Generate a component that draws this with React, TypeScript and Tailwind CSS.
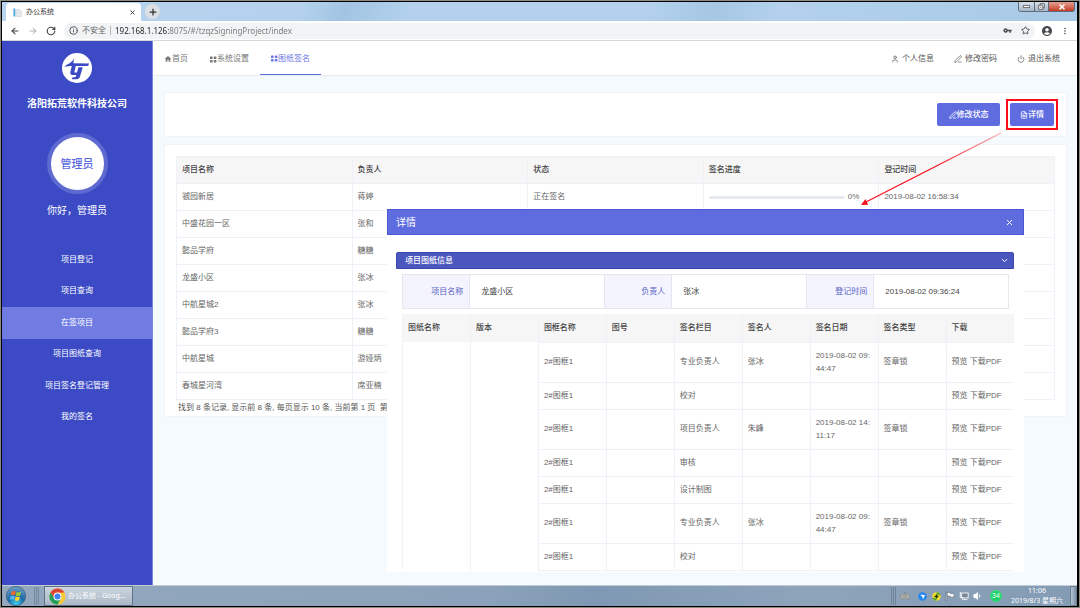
import type { ReactNode } from 'react';
import { ArrowLeft, ArrowRight, RotateCw, Info, Star, Plus, X, ChevronDown, User, PenLine, Power, FileText, Volume1 } from 'lucide-react';
import { MdAccountCircle, MdMoreVert, MdVpnKey, MdHome } from 'react-icons/md';

const projects = [
  ['虢园新居', '蒋婷'],
  ['中盛花园一区', '张和'],
  ['懿品学府', '糖糖'],
  ['龙盛小区', '张冰'],
  ['中航星城2', '张冰'],
  ['懿品学府3', '糖糖'],
  ['中航星城', '游娅炳'],
  ['春城星河湾', '席亚楠'],
];

const signatures = [
  { item: '专业负责人', who: '张冰', date: '2019-08-02 09:44:47', kind: '签章锁' },
  { item: '校对' },
  { item: '项目负责人', who: '朱峰', date: '2019-08-02 14:11:17', kind: '签章锁' },
  { item: '审核' },
  { item: '设计制图' },
  { item: '专业负责人', who: '张冰', date: '2019-08-02 09:44:47', kind: '签章锁' },
  { item: '校对' },
];

const menu = ['项目登记', '项目查询', '在签项目', '项目图纸查询', '项目签名登记管理', '我的签名'];

function GridIcon() {
  return (
    <svg viewBox="0 0 7 7" className="size-[7px]" fill="currentColor" aria-hidden="true">
      <rect x="0" y="0.4" width="2.6" height="2.6" rx="0.5" />
      <rect x="3.8" y="0.4" width="2.6" height="2.6" rx="0.5" />
      <rect x="0" y="4" width="2.6" height="2.6" rx="0.5" />
      <rect x="3.8" y="4" width="2.6" height="2.6" rx="0.5" />
    </svg>
  );
}

function CompanyLogo() {
  return (
    <svg viewBox="0 0 30 30" className="size-[30px]" aria-hidden="true">
      <circle cx="15" cy="15" r="15" fill="#fff" />
      <path fill="#3c4bc5" d="M2.2 13.8 Q4.5 11.4 7.6 10.2 Q10.4 8.8 12 5.4 L11.4 10.3 L27.2 10.5 L26 13.1 L8 13.1 Z" />
      <path fill="#3c4bc5" d="M9.8 12.8 H13.8 L12.3 19.4 H15 L16.4 14.2 H20.8 L18 23.5 Q17.3 26.3 14.5 26.3 H9.8 L10.5 24.2 H13 Q14 24 14.4 22 H10.6 Q7.8 21.8 8.4 19 Z" />
    </svg>
  );
}

function ChromeIcon() {
  return (
    <svg viewBox="0 0 18 18" className="size-[17px]" aria-hidden="true">
      <circle cx="9" cy="9" r="8.5" fill="#f8c93a" />
      <path d="M1.64 4.75 A8.5 8.5 0 0 1 16.36 4.75 L9 4.9 L5.4 11 Z" fill="#dc4437" />
      <path d="M1.64 4.75 A8.5 8.5 0 0 0 9 17.5 L12.7 11.1 L5.4 11.2 Z" fill="#1e9e58" />
      <circle cx="9" cy="9" r="4.2" fill="#fff" />
      <circle cx="9" cy="9" r="3.2" fill="#3f83f1" />
    </svg>
  );
}

function StartIcon() {
  return (
    <svg viewBox="0 0 20 20" className="size-5" aria-hidden="true">
      <defs>
        <radialGradient id="orb" cx="50%" cy="90%" r="85%">
          <stop offset="0" stopColor="#3fd0f2" />
          <stop offset="0.5" stopColor="#1a6aa8" />
          <stop offset="1" stopColor="#6f9cc0" />
        </radialGradient>
      </defs>
      <circle cx="10" cy="10" r="9.6" fill="url(#orb)" stroke="#2c5477" strokeWidth="0.7" />
      <path d="M5.6 5.6 Q7.8 4.4 9.8 5.6 L9 9.3 Q7 8.4 4.8 9.3 Z" fill="#f0682f" />
      <path d="M10.6 6 Q12.6 7 15.2 5.8 L14.2 9.6 Q12 10.6 9.8 9.7 Z" fill="#9ccc3b" />
      <path d="M4.6 10.1 Q6.8 9.2 8.8 10.1 L8 13.8 Q6 12.8 3.8 13.8 Z" fill="#55b7ee" />
      <path d="M9.6 10.5 Q11.8 11.4 14 10.4 L13.1 14.2 Q11 15.2 8.8 14.2 Z" fill="#fdd22f" />
    </svg>
  );
}

function Grip() {
  return (
    <svg viewBox="0 0 5 18" className="h-[18px] w-[5px]" aria-hidden="true">
      <path d="M0.5 0.5V18M2.5 0.5V18M4.5 0.5V18" stroke="#56687a" strokeWidth="1" strokeDasharray="1 1" />
    </svg>
  );
}

function BrowserChrome() {
  return (
    <header>
      <div className="flex h-[19px] items-end bg-[linear-gradient(115deg,#b8d4ee_0%,#b3d1ed_28%,#a2c4e2_32%,#b3d1ed_38%,#b3d1ed_60%,#a6c6e4_66%,#b3d1ed_72%,#a9c9e6_100%)]">
        <div className="ml-1 flex h-[18px] w-[135px] items-center rounded-t-[4px] bg-white pr-[5px] pl-[7px] text-[7px] text-[#333]">
          <svg viewBox="0 0 9 9" className="mr-1 size-[9px]" aria-hidden="true">
            <rect x="0.4" y="0.5" width="2" height="8" fill="#5aa7d8" />
            <path d="M3.6 1.5h3l1.8 1.8v5.2H3.6z" fill="#e3e8ec" stroke="#c1cad2" strokeWidth="0.5" />
          </svg>
          <span className="grow">办公系统</span>
          <button aria-label="关闭标签页"><X className="size-[7px]" strokeWidth={3} /></button>
        </div>
        <button aria-label="新标签页" className="mb-[2px] ml-1 flex size-[15px] items-center justify-center rounded-full bg-[#dcdfe3] text-[#333]">
          <Plus className="size-[10px]" strokeWidth={3} />
        </button>
        <div className="mr-[2px] ml-auto flex h-[10px] self-start overflow-hidden rounded-b-[3px] border border-t-0 border-[#5d6b7a]">
          <button aria-label="最小化" className="flex w-[15px] items-center justify-center bg-linear-to-b from-[#d5dfe9] to-[#a5b6c9]"><span className="h-[3px] w-[7px] border border-[#777] bg-white" /></button>
          <button aria-label="还原" className="flex w-[14px] items-center justify-center border-l border-[#5d6b7a] bg-linear-to-b from-[#d5dfe9] to-[#a5b6c9] text-[#555]">
            <svg viewBox="0 0 8 8" className="size-[7px]" aria-hidden="true"><path d="M2.5 0.8h4.7v4.7H2.5z" fill="#fff" stroke="currentColor" /><path d="M0.8 2.5h4.7v4.7H0.8z" fill="#fff" stroke="currentColor" /><path d="M2.6 4.2h1.2v1.2H2.6z" fill="currentColor" /></svg>
          </button>
          <button aria-label="关闭窗口" className="flex w-[26px] items-center justify-center border-l border-[#5d6b7a] bg-linear-to-b from-[#e2a194] to-[#c4351c] text-white"><X className="size-[8px]" strokeWidth={5} /></button>
        </div>
      </div>
      <div className="flex h-5 items-center border-b border-[#d5d7da] bg-white pr-[7px] pl-2 text-[#45484c]">
        <button aria-label="后退"><ArrowLeft className="size-[10px]" strokeWidth={2.6} /></button>
        <button aria-label="前进" className="ml-2 text-[#aaadb1]"><ArrowRight className="size-[10px]" strokeWidth={2.4} /></button>
        <button aria-label="刷新" className="ml-2"><RotateCw className="size-[10px]" strokeWidth={2.8} /></button>
        <div className="ml-2 flex h-4 grow items-center rounded-full bg-[#f1f3f4] px-[5px]">
          <Info className="size-[9px]" strokeWidth={2.4} />
          <span className="ml-1 text-[8px] text-[#666]">不安全</span>
          <span className="mx-1 h-[9px] w-px bg-[#b5b8bb]" />
          <input
            aria-label="地址"
            defaultValue="192.168.1.126:8075/#/tzqzSigningProject/index"
            className="h-3 min-w-0 grow bg-[linear-gradient(90deg,#222_54px,#777_54px)] bg-clip-text font-['Noto_Sans'] text-[8px] text-transparent outline-none"
          />
          <MdVpnKey className="size-[9px]" />
          <Star className="ml-[9px] size-[9px]" strokeWidth={2.4} />
        </div>
        <button aria-label="账户" className="ml-[6px]"><MdAccountCircle className="size-[12px]" /></button>
        <button aria-label="菜单" className="ml-[7px]"><MdMoreVert className="size-[10px]" /></button>
      </div>
    </header>
  );
}

function Sidebar() {
  return (
    <aside className="flex w-[151px] shrink-0 flex-col items-center border-r border-[#7c85dc] bg-[#3c4bc5] pt-3 text-white">
      <CompanyLogo />
      <h1 className="mt-[13px] text-[10px] leading-4 font-bold">洛阳拓荒软件科技公司</h1>
      <div className="mt-[21px] flex size-[61px] items-center justify-center rounded-full border-4 border-[#5e6ad0] bg-white text-[11px] font-medium text-[#5d6ade]">管理员</div>
      <p className="mt-[9px] text-[10px] leading-4">你好，管理员</p>
      <nav className="mt-[25px] flex h-[189px] w-full flex-col">
        {menu.map((name) => (
          <a key={name} href="#" className={name === '在签项目' ? 'flex grow items-center justify-center bg-[#707ce2] text-[8px]' : 'flex grow items-center justify-center text-[8px]'}>{name}</a>
        ))}
      </nav>
    </aside>
  );
}

function TopNav() {
  return (
    <div className="flex h-[35px] items-stretch border-b border-[#e8ebf0] bg-white text-[8px] text-[#777]">
      <a href="#" className="flex items-center px-[11px] pt-[2px]"><MdHome className="size-2" />首页</a>
      <a href="#" className="flex items-center px-[11px] pt-[2px]"><GridIcon />系统设置</a>
      <a href="#" className="flex items-center border-b border-[#5f6ce0] px-[11px] pt-[2px] text-[#6b76e6]"><GridIcon />图纸签名</a>
      <div className="ml-auto flex items-center gap-5 pt-[2px] pr-[17px] text-[#555]">
        <a href="#" className="flex items-center gap-[3px]"><User className="size-2" />个人信息</a>
        <a href="#" className="flex items-center gap-[3px]"><PenLine className="size-2" />修改密码</a>
        <a href="#" className="flex items-center gap-[3px]"><Power className="size-2" />退出系统</a>
      </div>
    </div>
  );
}

function ProjectTable() {
  return (
    <table className="w-full table-fixed border-collapse text-left text-[#666]">
      <thead>
        <tr className="h-[27px] bg-[#f6f6f6] text-[#444]">
          {['项目名称', '负责人', '状态', '签名进度', '登记时间'].map((h) => (
            <th key={h} className="border border-[#eff1f8] px-[5px] font-medium">{h}</th>
          ))}
        </tr>
      </thead>
      <tbody>
        {projects.map(([name, owner], i) => (
          <tr key={name} className="h-[27px]">
            <td className="border border-[#eff1f8] px-[5px]">{name}</td>
            <td className="border border-[#eff1f8] px-[5px]">{owner}</td>
            <td className="border border-[#eff1f8] px-[5px]">{i === 0 && '正在签名'}</td>
            <td className="border border-[#eff1f8] px-[5px]">
              {i === 0 && (
                <div className="flex items-center gap-[3px] pr-[14px]"><span className="h-[3px] grow rounded-full bg-[#e8eaf2]" />0%</div>
              )}
            </td>
            <td className="border border-[#eff1f8] px-[5px]">{i === 0 && '2019-08-02 16:58:34'}</td>
          </tr>
        ))}
      </tbody>
    </table>
  );
}

function InfoPair({ label, children }: { label: string; children: ReactNode }) {
  return (
    <>
      <dt className="flex items-center justify-end border-r border-[#e4e5ee] bg-[#f4f4fe] pr-[6px] text-[#5661c4]">{label}</dt>
      <dd className="flex items-center border-r border-[#e6e6ec] pl-[11px] text-[#444]">{children}</dd>
    </>
  );
}

function DetailDialog() {
  return (
    <section role="dialog" aria-label="详情" className="absolute top-[168px] right-[53px] left-[234px] bg-white pb-px">
      <div className="flex h-[26px] items-center justify-between border border-[#4b57d6] bg-[#5f6ce0] pr-[9px] pl-2 text-white">
        <h2 className="pt-[2px] text-[10px]">详情</h2>
        <button aria-label="关闭"><X className="size-[9px]" strokeWidth={2.6} /></button>
      </div>
      <div className="mt-[17px] mr-[10px] ml-[9px]">
        <button className="flex h-[17px] w-full items-center justify-between rounded-t-[2px] border border-[#3a45ae] bg-[#4b56bf] pr-1 pl-2 text-[8px] font-medium text-white">
          项目图纸信息<ChevronDown className="size-[9px]" strokeWidth={2.6} />
        </button>
      </div>
      <dl className="mt-[5px] mr-[15px] ml-[15px] grid h-[35px] grid-cols-[1fr_2fr_1fr_2fr_1fr_2fr] border border-r-0 border-[#e6e6ec]">
        <InfoPair label="项目名称">龙盛小区</InfoPair>
        <InfoPair label="负责人">张冰</InfoPair>
        <InfoPair label="登记时间">2019-08-02 09:36:24</InfoPair>
      </dl>
      <div className="mt-[5px] mr-[10px] ml-[15px]">
        <table className="w-full table-fixed border-collapse text-left text-[#666]">
          <thead>
            <tr className="h-7 bg-[#f6f6f6] text-[#444]">
              {['图纸名称', '版本', '图框名称', '图号', '签名栏目', '签名人', '签名日期', '签名类型', '下载'].map((h) => (
                <th key={h} className="border-x border-[#eff1f8] px-[5px] font-medium last:border-r-0">{h}</th>
              ))}
            </tr>
          </thead>
          <tbody>
            {signatures.map((s, i) => (
              <tr key={i} className={s.date ? 'h-10' : 'h-[27px]'}>
                {i === 0 && <td rowSpan={7} className="border-x border-[#eff1f8]" />}
                {i === 0 && <td rowSpan={7} className="border-x border-[#eff1f8]" />}
                <td className="border border-[#eff1f8] px-[5px]">2#图框1</td>
                <td className="border border-[#eff1f8]" />
                <td className="border border-[#eff1f8] px-[5px]">{s.item}</td>
                <td className="border border-[#eff1f8] px-[5px]">{s.who}</td>
                <td className="border border-[#eff1f8] px-[5px] leading-[13px] break-all">{s.date}</td>
                <td className="border border-[#eff1f8] px-[5px]">{s.kind}</td>
                <td className="border border-r-0 border-[#eff1f8] px-[5px] whitespace-nowrap"><a href="#">预览</a> <a href="#">下载PDF</a></td>
              </tr>
            ))}
          </tbody>
        </table>
      </div>
    </section>
  );
}

function Taskbar() {
  return (
    <footer className="flex h-[21px] items-center border-t border-[#c3ccd4] bg-[linear-gradient(100deg,#93a8bd_0%,#8ba2ba_45%,#7f98b3_55%,#8ea4bb_75%,#839bb4_100%)] text-white">
      <button aria-label="开始" className="ml-1"><StartIcon /></button>
      <span className="ml-2 flex"><Grip /></span>
      <button className="ml-[5px] flex h-5 w-[89px] items-center gap-[2px] border border-[#5f7185] bg-linear-to-b from-[#ccd5df] to-[#aab8c7] pl-1 text-[7px]">
        <ChromeIcon />
        <span className="font-['Noto_Sans','Noto_Sans_CJK_SC',sans-serif]">办公系统 - Goog...</span>
      </button>
      <div className="ml-auto flex items-center">
        <Grip />
        <svg viewBox="0 0 10 8" className="ml-1 h-2 w-[10px]" aria-hidden="true"><path d="M5 0v2" stroke="#6e7479" strokeWidth="0.7" /><rect x="0.5" y="2" width="9" height="5" rx="1" fill="#b4b4ae" stroke="#7e8489" strokeWidth="0.6" /><path d="M2 3.6h6M2 5.2h6" stroke="#888" strokeWidth="0.6" /></svg>
        <svg viewBox="0 0 10 10" className="ml-2 size-[9px]" aria-hidden="true"><circle cx="5" cy="5" r="4.8" fill="#2487ee" /><path d="M2.4 3 7.8 3.2 5.6 8 4.8 5.2z" fill="#fff" /></svg>
        <svg viewBox="0 0 10 10" className="ml-[5px] size-[9px]" aria-hidden="true"><circle cx="5" cy="5" r="4.7" fill="#f6e02c" /><path d="M0.6 6 A4.6 4.6 0 0 0 5 9.6 L5 7.6z M9.4 4 A4.6 4.6 0 0 0 5 0.4 L5 2.4z" fill="#52a82f" /><path d="M5 2.8v4.4M2.8 5h4.4" stroke="#173b12" strokeWidth="1.5" /></svg>
        <svg viewBox="0 0 10 10" className="ml-1 size-[10px]" aria-hidden="true"><path d="M1 0.8h1v8.8H1zM2 1.4h3.4v1h3.6v3.8H5.2v-1H2z" fill="#f5f7f8" stroke="#4e5a66" strokeWidth="0.5" /></svg>
        <svg viewBox="0 0 10 10" className="ml-1 size-[10px]" aria-hidden="true"><rect x="2.6" y="2" width="6.6" height="4.8" fill="#76858f" stroke="#eef1f3" strokeWidth="1" /><path d="M4 8.6h4.4M1.3 1v5.6h2.2v2" stroke="#eef1f3" strokeWidth="1" fill="none" /></svg>
        <Volume1 className="ml-1 size-[10px]" fill="currentColor" />
        <span className="ml-[7px] flex size-3 items-center justify-center rounded-full border border-[#35e07c] bg-[#1fcf69] text-[7px]">34</span>
        <div className="ml-[9px] text-center font-['Noto_Sans','Noto_Sans_CJK_SC',sans-serif] text-[7px] leading-[10px] whitespace-nowrap">
          <p>11:06</p>
          <p>2019/8/3 星期六</p>
        </div>
        <span className="ml-[7px] h-5 w-[7px] border border-[#6b7f93] bg-linear-to-r from-[#b3c3d2] to-[#7e93a8]" />
      </div>
    </footer>
  );
}

export default function App() {
  return (
    <div lang="zh-CN" className="flex min-h-screen flex-col border-2 border-r-[3px] border-black bg-[#f5faff] font-['Liberation_Sans','Noto_Sans_CJK_SC',sans-serif] text-[8px] leading-3 outline-1 -outline-offset-1 outline-[#8b8b84]">
      <BrowserChrome />
      <div className="flex grow">
        <Sidebar />
        <main className="relative min-w-0 grow">
          <TopNav />
          <div className="flex flex-col gap-[7px] pt-4 pr-[10px] pl-[11px]">
            <section className="flex h-[45px] items-center justify-end gap-[6px] rounded-[2px] border border-[#f0f3f8] bg-white pr-2">
              <button className="flex h-[23px] w-[63px] items-center justify-center rounded-[2px] bg-[#5f6ce0] font-medium text-white"><PenLine className="size-[8px]" strokeWidth={2.6} />修改状态</button>
              <div className="border-2 border-[#fb0d1b] p-[2px]">
                <button className="flex h-[23px] w-11 items-center justify-center rounded-[2px] bg-[#5f6ce0] font-medium text-white"><FileText className="size-[8px]" strokeWidth={2.4} />详情</button>
              </div>
            </section>
            <section className="rounded-[2px] border border-[#f0f3f8] bg-white px-[11px] pt-[11px] pb-[2px]">
              <ProjectTable />
              <p className="mt-[2px] pl-[2px] whitespace-pre text-[#555]">找到 8 条记录, 显示前 8 条, 每页显示 10 条, 当前第 1 页  第 1 页</p>
            </section>
          </div>
          <DetailDialog />
          <svg viewBox="0 0 150 80" className="pointer-events-none absolute top-[88px] right-[72px] h-20 w-[150px]" aria-hidden="true">
            <defs>
              <linearGradient id="fade" gradientUnits="userSpaceOnUse" x1="8" y1="74" x2="146" y2="3">
                <stop offset="0" stopColor="#fb0d1b" />
                <stop offset="0.5" stopColor="#fb0d1b" />
                <stop offset="1" stopColor="#fb0d1b" stopOpacity="0.3" />
              </linearGradient>
            </defs>
            <path d="M11 73 L146 4" stroke="url(#fade)" strokeWidth="1.3" fill="none" />
            <path d="M6 76 L10.4 70 L13.2 75.8 Z" fill="#fb0d1b" />
          </svg>
        </main>
      </div>
      <Taskbar />
    </div>
  );
}
